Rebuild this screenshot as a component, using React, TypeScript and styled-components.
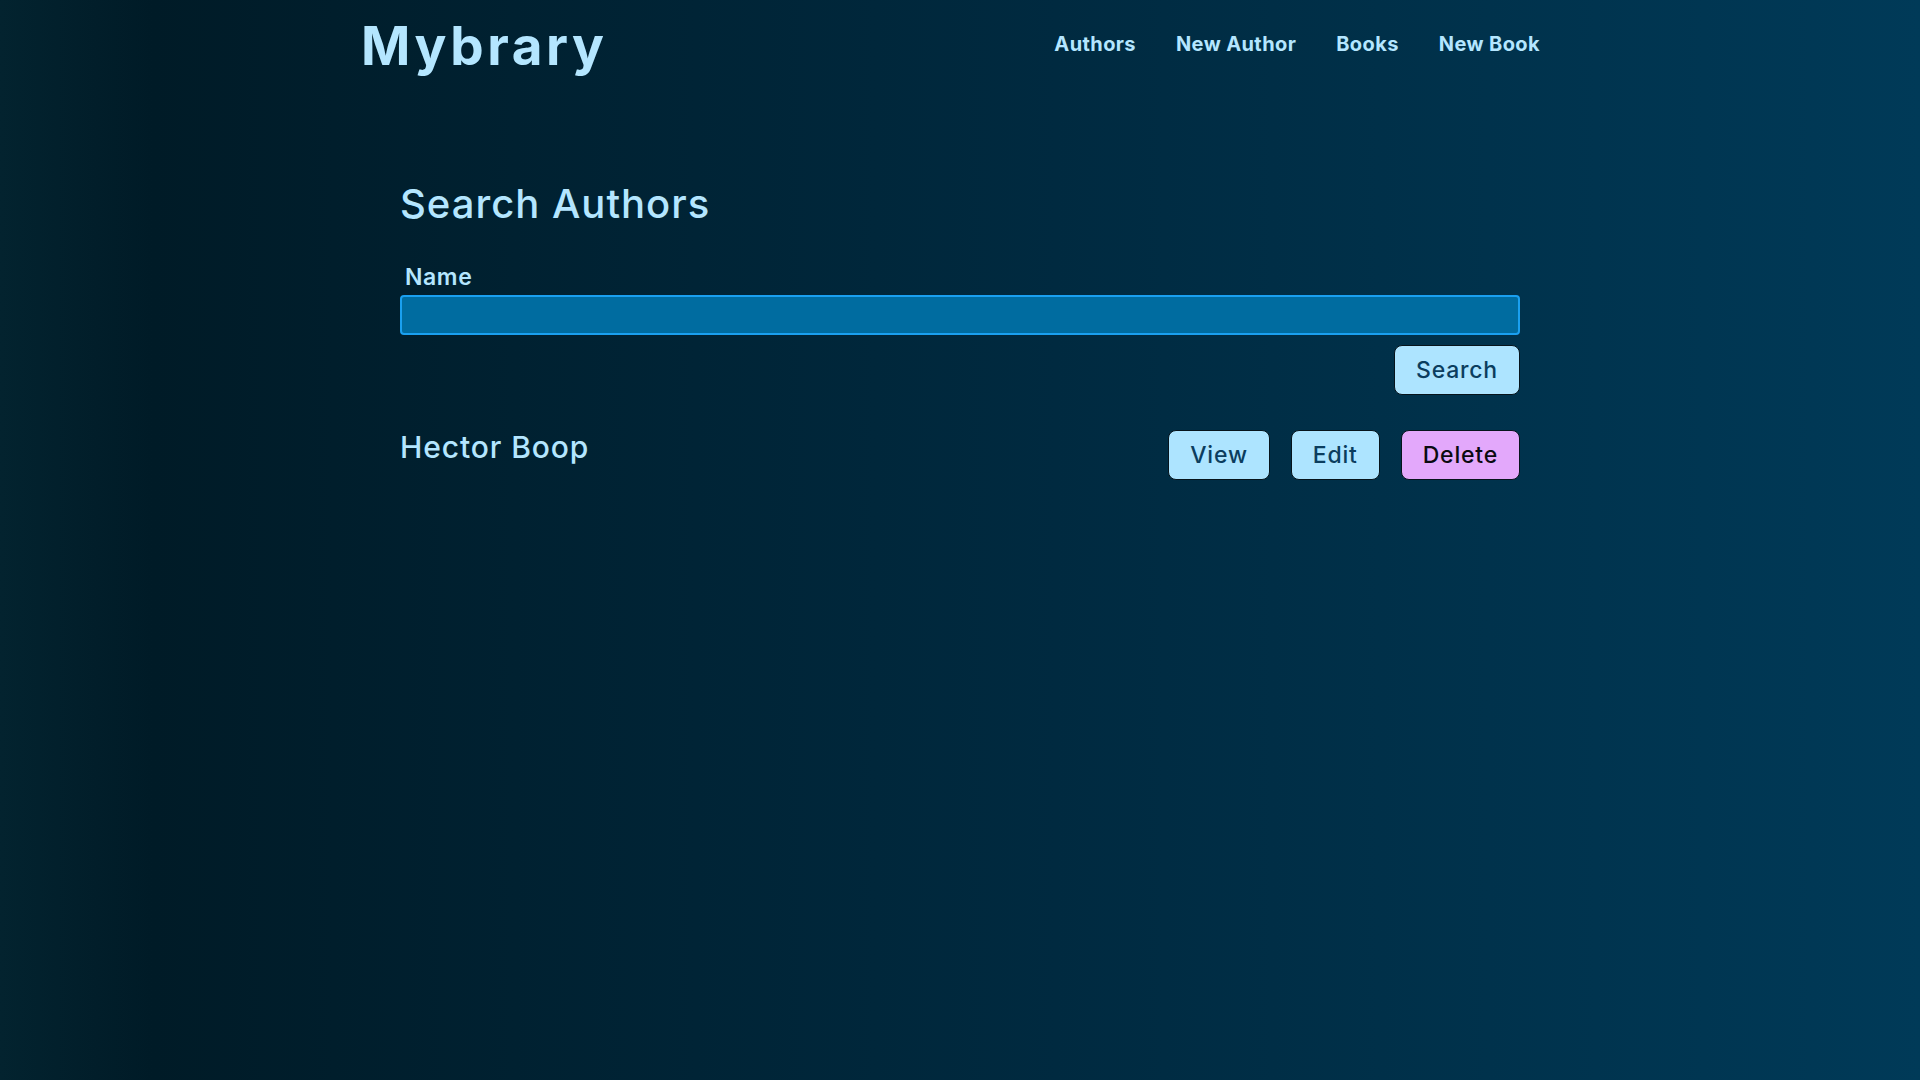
import React from "react";
import styled, { createGlobalStyle } from "styled-components";

const GlobalStyle = createGlobalStyle`
  html, body {
    margin: 0;
    padding: 0;
    min-height: 100%;
  }
  body {
    min-height: 100vh;
    font-family: Inter, "Open Sans", "Liberation Sans", sans-serif;
    color: #b4e6ff;
    background: linear-gradient(to right, #03232f 0%, #001b27 8%, #002a40 55%, #003a58 100%);
  }
`;

const Page = styled.div`
  width: 1200px;
  margin: 0 auto;
`;

const Header = styled.header`
  display: flex;
  align-items: center;
  justify-content: space-between;
  padding: 18px 20px 0 1px;
  height: 90px;
  box-sizing: border-box;
`;

const Logo = styled.a`
  font-size: 53px;
  font-weight: 700;
  letter-spacing: 3.6px;
  color: #b4e6ff;
  text-decoration: none;
  line-height: 1;
  margin-top: -16px;
`;

const Nav = styled.nav`
  display: flex;
  gap: 40px;
  margin-top: -20px;
`;

const NavLink = styled.a`
  font-size: 20px;
  font-weight: 700;
  letter-spacing: 0.4px;
  color: #b4e6ff;
  text-decoration: none;
`;

const Main = styled.main`
  padding: 94px 40px 0;
`;

const Title = styled.h2`
  margin: 0;
  font-size: 40px;
  font-weight: 500;
  letter-spacing: 1px;
  line-height: 1;
  color: #b4e6ff;
`;

const Form = styled.form`
  display: flex;
  flex-direction: column;
  margin-top: 40px;
`;

const Label = styled.label`
  font-size: 23px;
  font-weight: 600;
  letter-spacing: 0.6px;
  padding-left: 5px;
  margin-bottom: 3px;
  line-height: 1.2;
`;

const Input = styled.input`
  height: 40px;
  box-sizing: border-box;
  background: #006ca0;
  border: 2px solid #1aa0f0;
  border-radius: 4px;
  color: #b4e6ff;
  font: inherit;
  font-size: 20px;
  outline: none;
`;

const Actions = styled.div`
  display: flex;
  justify-content: flex-end;
  gap: 21px;
`;

const Button = styled.button<{ $variant?: "primary" | "danger" }>`
  height: 50px;
  padding: 0 21px;
  font-family: inherit;
  font-size: 23px;
  font-weight: 500;
  letter-spacing: 0.8px;
  border: 1px solid #06141c;
  border-radius: 8px;
  cursor: pointer;
  background: ${(p) => (p.$variant === "danger" ? "#e3a8fb" : "#ade4ff")};
  color: ${(p) => (p.$variant === "danger" ? "#0a0a10" : "#0b3d5e")};
`;

const SearchRow = styled(Actions)`
  margin-top: 10px;
`;

const AuthorRow = styled.div`
  display: flex;
  justify-content: space-between;
  align-items: flex-start;
  margin-top: 35px;
`;

const AuthorName = styled.div`
  font-size: 30px;
  font-weight: 500;
  letter-spacing: 0.9px;
  margin-top: -1px;
`;

export default function App() {
  return (
    <>
      <GlobalStyle />
      <Page>
        <Header>
          <Logo href="#">Mybrary</Logo>
          <Nav>
            <NavLink href="#">Authors</NavLink>
            <NavLink href="#">New Author</NavLink>
            <NavLink href="#">Books</NavLink>
            <NavLink href="#">New Book</NavLink>
          </Nav>
        </Header>
        <Main>
          <Title>Search Authors</Title>
          <Form onSubmit={(e) => e.preventDefault()}>
            <Label htmlFor="name">Name</Label>
            <Input id="name" type="text" />
            <SearchRow>
              <Button type="submit">Search</Button>
            </SearchRow>
          </Form>
          <AuthorRow>
            <AuthorName>Hector Boop</AuthorName>
            <Actions>
              <Button type="button">View</Button>
              <Button type="button">Edit</Button>
              <Button type="button" $variant="danger">Delete</Button>
            </Actions>
          </AuthorRow>
        </Main>
      </Page>
    </>
  );
}
